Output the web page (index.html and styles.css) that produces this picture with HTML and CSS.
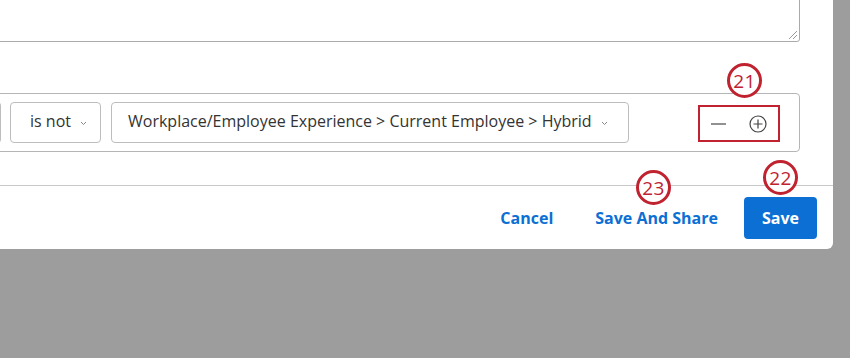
FILE: index.html
```html
<!DOCTYPE html>
<html>
<head>
<meta charset="utf-8">
<link rel="stylesheet" href="styles.css">
</head>
<body>
<div class="modal">
  <div class="content">
    <div class="textarea"><span class="grip"></span></div>
    <div class="condition">
      <div class="dd dd-prev"></div>
      <div class="dd dd-op">is not <svg class="chev" width="7" height="5" viewBox="0 0 7 5"><path d="M1 1l2.5 2.5L6 1" fill="none" stroke="#888" stroke-width="1"/></svg></div>
      <div class="dd dd-val">Workplace/Employee Experience &gt; Current Employee &gt; Hybrid <svg class="chev" width="7" height="5" viewBox="0 0 7 5"><path d="M1 1l2.5 2.5L6 1" fill="none" stroke="#888" stroke-width="1"/></svg></div>
      <div class="spacer"></div>
      <div class="actions">
        <svg width="16" height="2" viewBox="0 0 16 2"><path d="M0 1h15" stroke="#555" stroke-width="1.3"/></svg>
        <svg width="18" height="18" viewBox="0 0 18 18"><circle cx="9" cy="9" r="8" fill="none" stroke="#444" stroke-width="1.2"/><path d="M9 4.5v9M4.5 9h9" stroke="#444" stroke-width="1.2"/></svg>
      </div>
    </div>
  </div>
  <div class="footer">
    <button class="link">Cancel</button>
    <button class="link share">Save And Share</button>
    <button class="primary">Save</button>
  </div>
  <span class="badge b21">21</span>
  <span class="badge b22">22</span>
  <span class="badge b23">23</span>
</div>
</body>
</html>
```

FILE: styles.css
```css
html, body {
  margin: 0;
  padding: 0;
}
body {
  background: #9d9d9d;
  font-family: "Open Sans", "Liberation Sans", sans-serif;
  width: 850px;
  height: 358px;
  overflow: hidden;
}
.modal {
  position: relative;
  width: 833px;
  height: 249px;
  background: #fff;
  border-bottom-right-radius: 6px;
  overflow: hidden;
}
.content {
  padding-right: 33px;
}
.textarea {
  position: relative;
  margin-left: -12px;
  margin-top: -40px;
  height: 80px;
  border: 1px solid #aaa;
  border-radius: 3px;
  background: #fff;
}
.grip {
  position: absolute;
  right: 2px;
  bottom: 2px;
  width: 8px;
  height: 8px;
  background: linear-gradient(135deg, transparent 45%, #999 46%, #999 52%, transparent 53%, transparent 70%, #999 71%, #999 77%, transparent 78%);
}
.condition {
  display: flex;
  align-items: center;
  margin-top: 51px;
  margin-left: -20px;
  height: 57px;
  border: 1px solid #b5b5b5;
  border-radius: 4px;
  gap: 9px;
}
.dd {
  box-sizing: border-box;
  height: 41px;
  border: 1px solid #bdbdbd;
  border-radius: 4px;
  display: flex;
  align-items: center;
  font-size: 16px;
  color: #333;
  white-space: nowrap;
  padding-bottom: 3px;
}
.dd-prev {
  width: 20px;
  border-left: none;
  border-radius: 0 4px 4px 0;
}
.dd-op {
  width: 91px;
  padding-left: 19px;
}
.dd-val {
  width: 518px;
  padding-left: 16px;
  margin-left: 1px;
}
.chev {
  margin-left: 9px;
  margin-top: 5px;
}
.spacer {
  flex: 1;
}
.actions {
  box-sizing: border-box;
  width: 82px;
  height: 37px;
  margin-right: 19px;
  margin-top: 2px;
  border: 2.5px solid #c0222f;
  display: flex;
  align-items: center;
  padding-left: 11px;
  gap: 22px;
}
.footer {
  margin-top: 33px;
  border-top: 1px solid #c8c8c8;
  display: flex;
  justify-content: flex-end;
  align-items: center;
  padding: 11px 16px 0 0;
}
button {
  font-family: "Open Sans", "Liberation Sans", sans-serif;
  font-weight: 700;
  font-size: 16px;
  border: none;
  background: none;
  cursor: pointer;
  padding: 0;
}
.link {
  color: #0b6fd4;
  height: 42px;
}
.share {
  margin-left: 42px;
}
.primary {
  margin-left: 26px;
  width: 73px;
  height: 42px;
  background: #0b6fd4;
  color: #fff;
  border-radius: 4px;
}
.badge {
  position: absolute;
  box-sizing: border-box;
  width: 35px;
  height: 35px;
  border: 3px solid #c0222f;
  border-radius: 50%;
  background: #fff;
  color: #c0222f;
  font-size: 19px;
  display: flex;
  align-items: center;
  justify-content: center;
  letter-spacing: 0.5px;
}
.b21 { left: 727px; top: 63px; }
.b22 { left: 763px; top: 160px; }
.b23 { left: 636px; top: 170px; }
```
